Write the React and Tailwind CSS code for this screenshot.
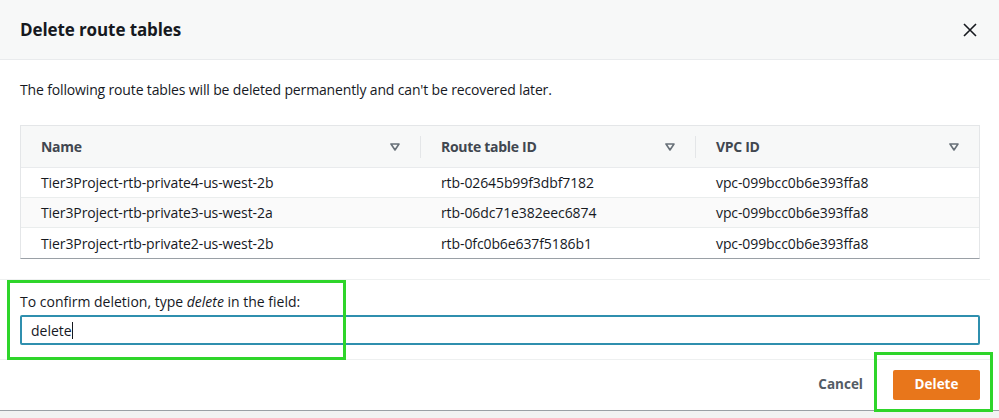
import React from 'react';

const ROWS = [
  ['Tier3Project-rtb-private4-us-west-2b', 'rtb-02645b99f3dbf7182', 'vpc-099bcc0b6e393ffa8'],
  ['Tier3Project-rtb-private3-us-west-2a', 'rtb-06dc71e382eec6874', 'vpc-099bcc0b6e393ffa8'],
  ['Tier3Project-rtb-private2-us-west-2b', 'rtb-0fc0b6e637f5186b1', 'vpc-099bcc0b6e393ffa8'],
];

function FilterIcon() {
  return (
    <svg width="10" height="8" viewBox="0 0 10 8" className="shrink-0">
      <path d="M1 1h8L5 7z" fill="none" stroke="#687078" strokeWidth="1.6" strokeLinejoin="round" />
    </svg>
  );
}

function HeaderCell({ label, divider }) {
  return (
    <div className="flex items-center h-full">
      <div className="flex-1 flex items-center justify-between pl-5 pr-5">
        <span className="font-bold text-[#414750]">{label}</span>
        <FilterIcon />
      </div>
      {divider && <div className="w-px h-[22px] bg-[#e4e6e8]" />}
    </div>
  );
}

export default function App() {
  return (
    <div className="relative w-[999px] h-[418px] bg-white text-[#16191f] overflow-hidden" style={{ fontFamily: '"Open Sans", "Liberation Sans", sans-serif' }}>
      {/* Header */}
      <div className="h-[60px] bg-[#f7f8f8] border-b border-[#e9ebed] flex items-center justify-between pl-5 pr-[22px]">
        <h2 className="text-[17px] font-bold tracking-[-0.1px] text-[#16191f] pt-[1px]">Delete route tables</h2>
        <svg width="14" height="14" viewBox="0 0 14 14">
          <path d="M1 1l12 12M13 1L1 13" stroke="#16191f" strokeWidth="1.6" />
        </svg>
      </div>

      {/* Body */}
      <div className="pt-[20px] px-5">
        <p className="text-[14px] leading-[20px] tracking-[-0.15px]">
          The following route tables will be deleted permanently and can't be recovered later.
        </p>

        <div className="mt-[25px] w-[960px] border border-[#e4e6e8] border-b-[#9aa0a6] text-[14px] tracking-[-0.1px]">
          <div className="grid grid-cols-[400px_275px_1fr] h-[42px] bg-[#f7f8f8] border-b border-[#e9ebed] tracking-[-0.3px]">
            <HeaderCell label="Name" divider />
            <HeaderCell label="Route table ID" divider />
            <HeaderCell label="VPC ID" />
          </div>
          {ROWS.map((r, i) => (
            <div
              key={i}
              className={`grid grid-cols-[400px_275px_1fr] h-[30px] items-center ${i === 1 ? 'bg-[#fafafa]' : 'bg-white'} ${i < 2 ? 'border-b border-[#eaeded]' : ''}`}
            >
              <span className="pl-5">{r[0]}</span>
              <span className="pl-5">{r[1]}</span>
              <span className="pl-5">{r[2]}</span>
            </div>
          ))}
        </div>
      </div>

      {/* Confirm field */}
      <div className="mt-[20px] border-t border-[#eef0f0] w-[990px] pt-[12px] px-5 pb-[14px]">
        <label className="block text-[14px] leading-[20px]">
          To confirm deletion, type <em>delete</em> in the field:
        </label>
        <div className="mt-[3px] w-[960px] h-[30px] border-2 border-[#2f8fae] rounded-[2px] flex items-center pl-[9px] text-[14px]">
          delete<span className="w-px h-[17px] bg-[#16191f]" />
        </div>
      </div>

      {/* Footer */}
      <div className="border-t border-[#eef0f0] w-[990px] h-[50px] flex items-center justify-end gap-[30px] pr-[10px]">
        <button className="text-[13.5px] font-bold text-[#545b64]">Cancel</button>
        <button className="w-[87px] h-[30px] bg-[#e8761b] rounded-[2px] text-white text-[13.5px] font-bold">Delete</button>
      </div>
      <div className="absolute left-0 right-0 top-[410px] bottom-0 bg-[#f2f3f3] border-t border-[#9aa0a6]" />

      {/* Annotation boxes */}
      <div className="absolute left-[7px] top-[280px] w-[339px] h-[80px] border-[3px] border-[#2ed52a] pointer-events-none" />
      <div className="absolute left-[874px] top-[352px] w-[119px] h-[60px] border-[3px] border-[#2ed52a] pointer-events-none" />
    </div>
  );
}
